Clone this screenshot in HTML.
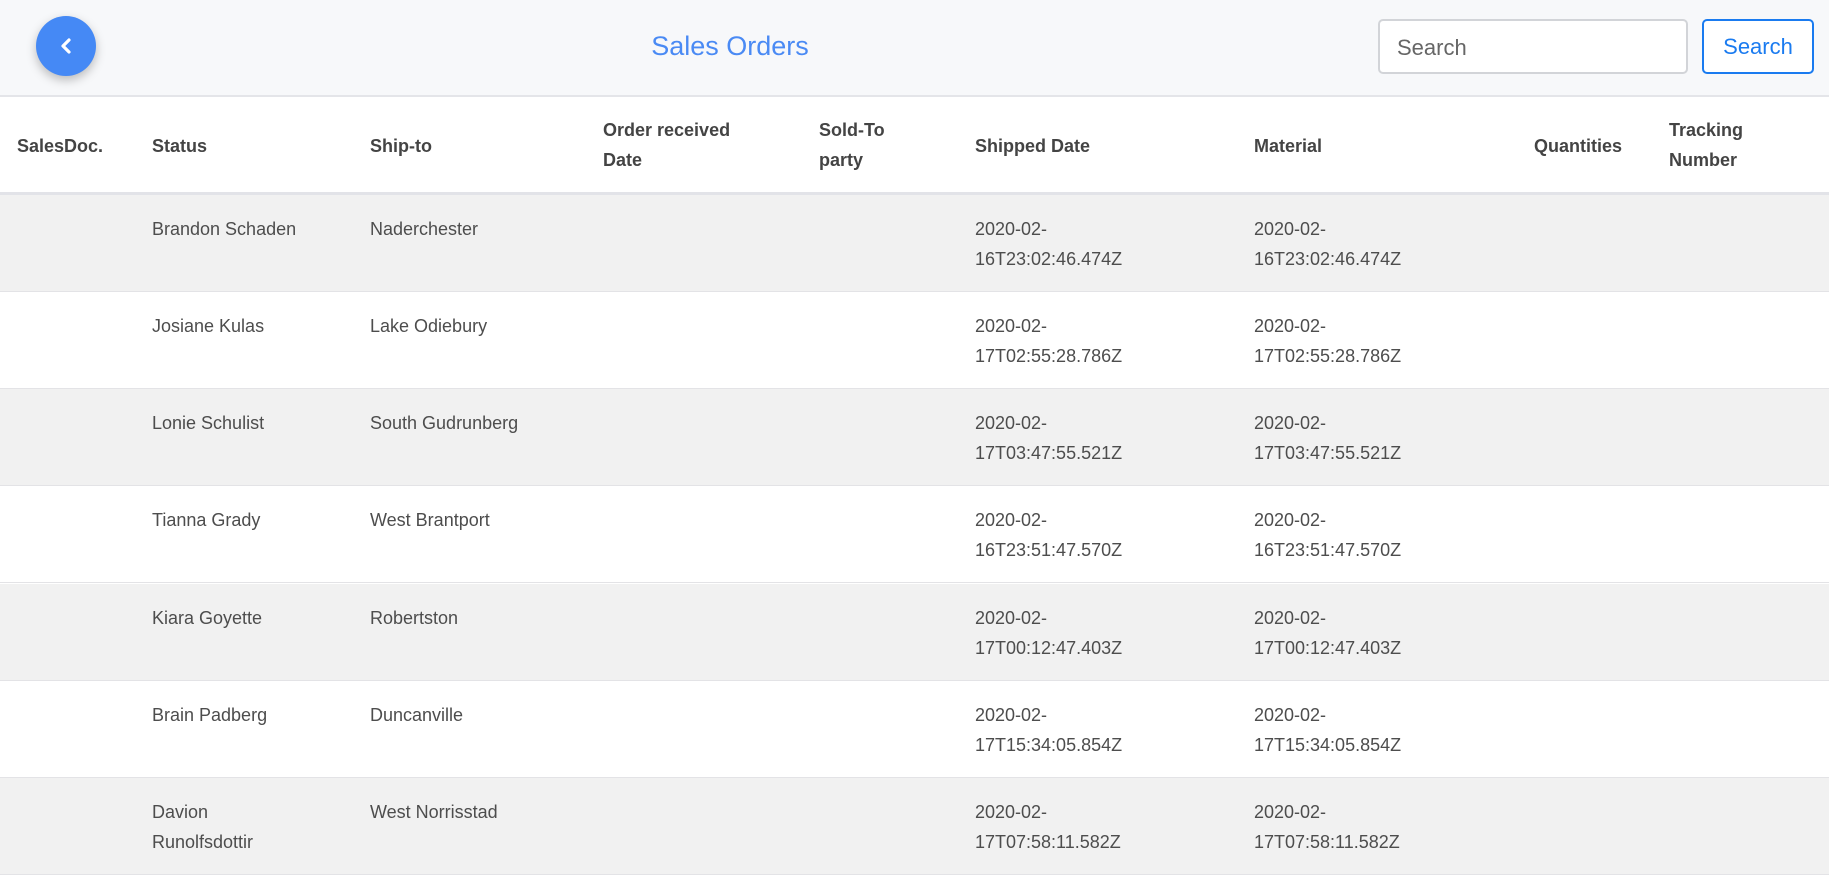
<!DOCTYPE html>
<html><head><meta charset="utf-8"><style>
*{margin:0;padding:0;box-sizing:border-box}
body{width:1829px;height:862px;overflow:hidden;background:#fff;font-family:"Liberation Sans",Arial,sans-serif;color:#4d4d4d;position:relative}
.hdr{position:absolute;left:0;top:0;width:1829px;height:97px;background:#f7f8fa;border-bottom:2px solid #e4e5e9}
.back{position:absolute;left:36px;top:16px;width:60px;height:60px;border-radius:50%;background:#4589f5;box-shadow:0 4px 10px rgba(0,0,0,.25)}
.title{position:absolute;left:0;width:1460px;text-align:center;top:31px;font-size:27px;color:#4a8af4}
.inp{position:absolute;left:1378px;top:19px;width:310px;height:55px;border:2px solid #d2d4d8;border-radius:5px;background:#fff;font-size:22px;color:#666;padding:14px 0 0 17px}
.btn{position:absolute;left:1702px;top:19px;width:112px;height:55px;border:2px solid #1a7bf0;border-radius:5px;background:#fff;font-size:22px;color:#1a7bf0;text-align:center;padding-top:13px}
.th{position:absolute;top:98px;left:0;width:1829px;height:97px;background:#fff;border-bottom:3px solid #e2e3e8}
.c{position:absolute;font-size:18px;line-height:30px;white-space:nowrap}
.th .c{font-weight:bold;color:#444}
.row{position:absolute;left:0;width:1829px;height:97px;border-bottom:1px solid #e3e3e6}
.g{background:#f1f1f1}
.row .c{top:19px}
</style></head><body>
<div class="hdr">
<div class="back"><svg width="60" height="60" viewBox="0 0 60 60"><path d="M33 24 L27 30 L33 36" stroke="#fff" stroke-width="3.2" fill="none" stroke-linecap="round" stroke-linejoin="round"/></svg></div>
<div class="title">Sales Orders</div>
<div class="inp">Search</div>
<div class="btn">Search</div>
</div>
<div class="th">
<div class="c" style="left:17px;top:33px">SalesDoc.</div>
<div class="c" style="left:152px;top:33px">Status</div>
<div class="c" style="left:370px;top:33px">Ship-to</div>
<div class="c" style="left:603px;top:17px">Order received<br>Date</div>
<div class="c" style="left:819px;top:17px">Sold-To<br>party</div>
<div class="c" style="left:975px;top:33px">Shipped Date</div>
<div class="c" style="left:1254px;top:33px">Material</div>
<div class="c" style="left:1534px;top:33px">Quantities</div>
<div class="c" style="left:1669px;top:17px">Tracking<br>Number</div>
</div>
<div class="row g" style="top:195px"><div class="c" style="left:152px">Brandon Schaden</div><div class="c" style="left:370px">Naderchester</div><div class="c" style="left:975px">2020-02-<br>16T23:02:46.474Z</div><div class="c" style="left:1254px">2020-02-<br>16T23:02:46.474Z</div></div>
<div class="row" style="top:292px"><div class="c" style="left:152px">Josiane Kulas</div><div class="c" style="left:370px">Lake Odiebury</div><div class="c" style="left:975px">2020-02-<br>17T02:55:28.786Z</div><div class="c" style="left:1254px">2020-02-<br>17T02:55:28.786Z</div></div>
<div class="row g" style="top:389px"><div class="c" style="left:152px">Lonie Schulist</div><div class="c" style="left:370px">South Gudrunberg</div><div class="c" style="left:975px">2020-02-<br>17T03:47:55.521Z</div><div class="c" style="left:1254px">2020-02-<br>17T03:47:55.521Z</div></div>
<div class="row" style="top:486px"><div class="c" style="left:152px">Tianna Grady</div><div class="c" style="left:370px">West Brantport</div><div class="c" style="left:975px">2020-02-<br>16T23:51:47.570Z</div><div class="c" style="left:1254px">2020-02-<br>16T23:51:47.570Z</div></div>
<div class="row g" style="top:584px"><div class="c" style="left:152px">Kiara Goyette</div><div class="c" style="left:370px">Robertston</div><div class="c" style="left:975px">2020-02-<br>17T00:12:47.403Z</div><div class="c" style="left:1254px">2020-02-<br>17T00:12:47.403Z</div></div>
<div class="row" style="top:681px"><div class="c" style="left:152px">Brain Padberg</div><div class="c" style="left:370px">Duncanville</div><div class="c" style="left:975px">2020-02-<br>17T15:34:05.854Z</div><div class="c" style="left:1254px">2020-02-<br>17T15:34:05.854Z</div></div>
<div class="row g" style="top:778px"><div class="c" style="left:152px">Davion<br>Runolfsdottir</div><div class="c" style="left:370px">West Norrisstad</div><div class="c" style="left:975px">2020-02-<br>17T07:58:11.582Z</div><div class="c" style="left:1254px">2020-02-<br>17T07:58:11.582Z</div></div>
</body></html>
